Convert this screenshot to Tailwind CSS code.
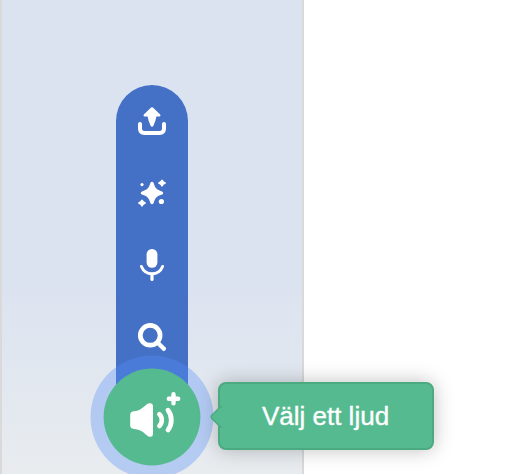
<!DOCTYPE html>
<html lang="sv">
<head>
<meta charset="utf-8">
<title>Välj ett ljud</title>
<script src="https://cdn.jsdelivr.net/npm/@tailwindcss/browser@4"></script>
</head>
<body class="h-[474px] w-[512px] overflow-hidden bg-white">
<main class="relative flex h-[474px] w-[512px] overflow-hidden">
  <aside class="flex w-[304px] flex-col items-center border-x-2 border-[#d9d9d9] bg-linear-to-b from-[#dce3f0] from-60% to-[#e8ecef] pt-[85px]">
    <!-- Expanded action menu -->
    <nav class="flex h-[332px] w-[72px] shrink-0 flex-col rounded-t-full bg-[#4470c6] text-white">
      <button class="size-[72px] shrink-0" aria-label="Ladda upp">
        <svg class="size-[72px]" viewBox="0 0 72 72" fill="none">
          <path d="M36.9 22.6 44.2 29.6Q45.2 31.4 43.4 31.5H40.4Q39.7 36 37.4 40.8Q36 43 34.6 40.8Q32.3 36 31.6 31.5H28.6Q26.8 31.4 27.8 29.6L35.1 22.6Q36 21.8 36.9 22.6Z" fill="currentColor"/>
          <path d="M24 39V43.5Q24 48 28.5 48H43.5Q48 48 48 43.5V39" stroke="currentColor" stroke-width="4" stroke-linecap="round"/>
        </svg>
      </button>
      <button class="size-[72px] shrink-0" aria-label="Överraskning">
        <svg class="size-[72px]" viewBox="0 0 72 72" fill="currentColor">
          <path d="M34.3 26Q36 23.4 37.7 26C39 31 41 33 45.7 34.2Q48.8 36 45.7 37.8C41 39 39 41 37.7 46Q36 48.6 34.3 46C33 41 31 39 26.3 37.8Q23.2 36 26.3 34.2C31 33 33 31 34.3 26Z"/>
          <path d="M45.1 23.1Q46 21.7 46.9 23.1Q47.3 24.8 49 25.1Q51 26.1 49 27.1Q47.3 27.4 46.9 29.1Q46 30.6 45.1 29.1Q44.7 27.4 43 27.1Q41 26.1 43 25.1Q44.7 24.8 45.1 23.1Z"/>
          <path d="M25.1 43.1Q26 41.7 26.9 43.1Q27.3 44.8 29 45.1Q31 46.1 29 47.1Q27.3 47.4 26.9 49.1Q26 50.6 25.1 49.1Q24.7 47.4 23 47.1Q21 46.1 23 45.1Q24.7 44.8 25.1 43.1Z"/>
          <circle cx="26" cy="27.6" r="1.6"/><circle cx="45.4" cy="44.5" r="2.6"/>
        </svg>
      </button>
      <button class="size-[72px] shrink-0" aria-label="Spela in">
        <svg class="size-[72px]" viewBox="0 0 72 72" fill="none" stroke="currentColor" stroke-linecap="round">
          <rect x="30.6" y="20" width="10.8" height="18.8" rx="5.2" fill="currentColor" stroke="none"/>
          <path d="M25.4 37.5C29.5 47.2 42.5 47.2 46.6 37.5" stroke-width="3"/>
          <path d="M36 45V50.4" stroke-width="3.2"/>
        </svg>
      </button>
      <button class="size-[72px] shrink-0" aria-label="Sök">
        <svg class="size-[72px]" viewBox="0 0 72 72" fill="none" stroke="currentColor" stroke-linecap="round">
          <circle cx="34.2" cy="34.3" r="9.9" stroke-width="4.7"/>
          <path d="M41.5 41.5 47.8 47.8" stroke-width="4.4"/>
        </svg>
      </button>
    </nav>
  </aside>
  <!-- Main button overlapping the menu's lower end -->
  <button class="absolute top-[355px] left-[90px] size-[124px] rounded-full" aria-label="Välj ett ljud">
    <svg class="size-[124px] text-white" viewBox="90 355 124 124" fill="none" stroke="currentColor" stroke-linecap="round">
      <circle cx="152" cy="417" r="61.5" fill="#5690f8" fill-opacity="0.35" stroke="none"/>
      <circle cx="152" cy="417" r="48.4" fill="#56ba90" stroke="none"/>
      <path d="M130.2 414.5Q130.4 411.4 134 411.2C140 410.8 143 407.5 146.5 404.5Q149 402.7 151.5 403.5Q153 404.2 153 406.3V433.8Q153 436.5 151 436.8Q148.7 437.2 146.5 435C143 432 140 429.3 134 429Q130.4 428.7 130.2 425.6Z" fill="currentColor" stroke="none"/>
      <path d="M159.4 414.2C162.6 417 162.6 423 159.4 426" stroke-width="4.6"/>
      <path d="M168 410.2C172.4 415.5 172.4 424.5 168 430" stroke-width="4.8"/>
      <path d="M173.5 394.2V403.3M168.8 398.7H178.2" stroke-width="4.4"/>
    </svg>
  </button>
  <!-- Tooltip -->
  <div role="tooltip" class="absolute top-[382px] left-[218px] flex h-[68px] w-[216px] items-center justify-center rounded-lg border-2 border-[#4caa80] bg-[#56ba90] pr-px shadow-[0_0_20px_rgba(0,0,0,0.25)]">
    <svg class="absolute top-[22px] -left-[10px] h-[22px] w-[14px]" viewBox="0 0 14 22" fill="none">
      <path d="M12 0.8H10.5L1.8 9.2Q0.6 10.8 1.8 12.4L10.5 20.9H12Z" fill="#56ba90"/>
      <path d="M12 0.8H10.5L1.8 9.2Q0.6 10.8 1.8 12.4L10.5 20.9H12" stroke="#4caa80" stroke-width="1.5"/>
    </svg>
    <span class="font-['Liberation_Sans',Arial,sans-serif] text-[26px] leading-none whitespace-nowrap text-white [-webkit-text-stroke:0.35px_white]">Välj ett ljud</span>
  </div>
</main>
</body>
</html>
